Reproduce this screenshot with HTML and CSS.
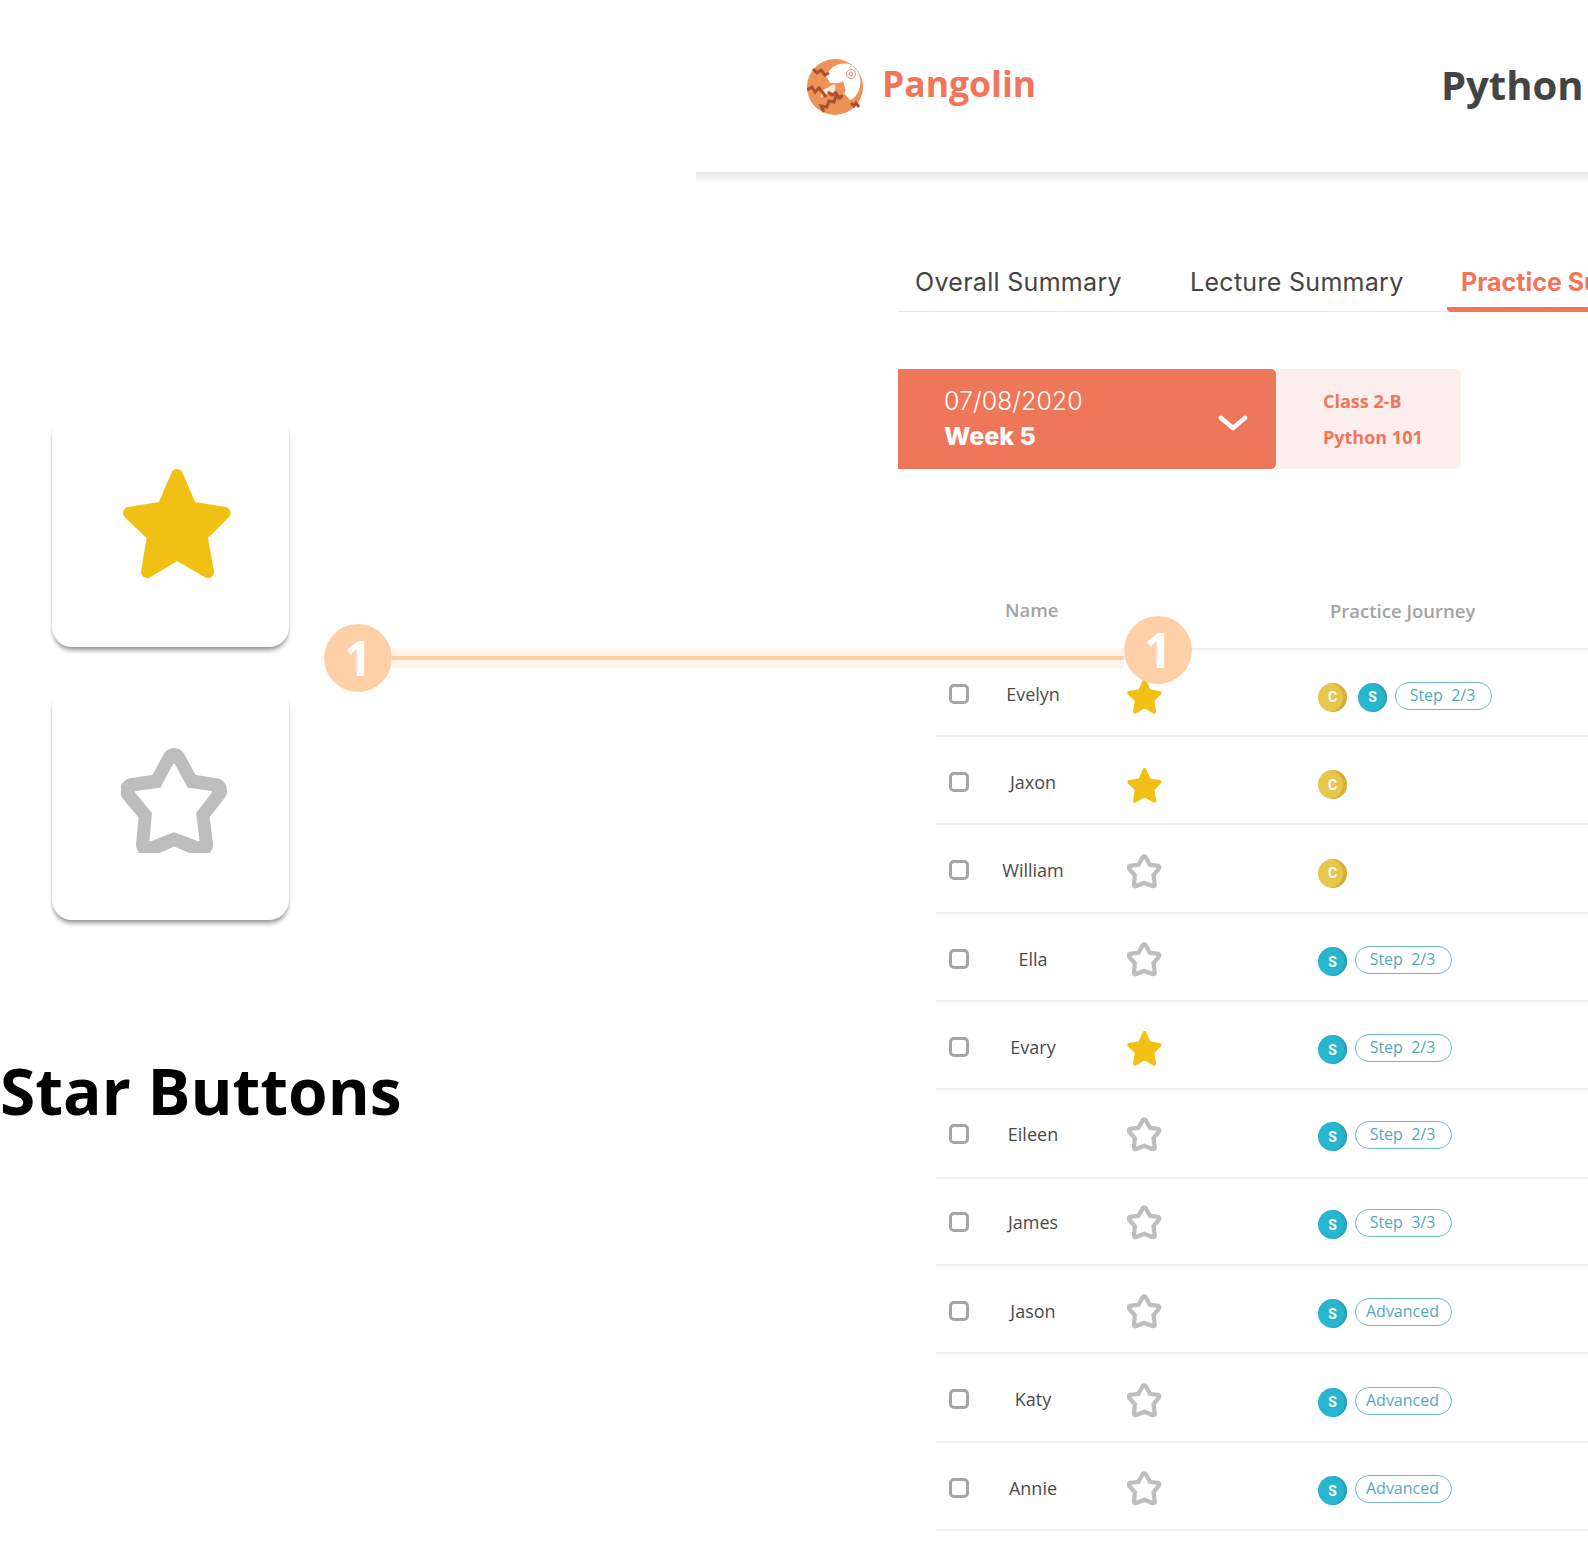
FILE: index.html
```html
<!DOCTYPE html>
<html>

	<head lang="en">
		<meta charset="UTF-8">
		<title>Star Buttons</title>
		<link rel="stylesheet" href="styles.css">
	</head>

	<body>
		<svg class="defs" width="0" height="0">
			<symbol id="star-on" viewBox="0 0 108 110">
				<polygon points="54,6 68,38.5 101.6,44 78.5,67 85,103 54,85 24,103 30,67 6,44 40,38.5" fill="#f0c014" stroke="#f0c014" stroke-width="12" stroke-linejoin="round"/>
			</symbol>
			<symbol id="star-off" viewBox="0 0 108 108" preserveAspectRatio="none">
				<polygon points="53,13 67,38 94,42 76,64 80,94 53,83 27,94 30,64 11,42 39,38" fill="#bdbdbd" stroke="#bdbdbd" stroke-width="24" stroke-linejoin="round"/>
				<polygon points="53,17 66,40 90,43.5 74,63.5 77.5,90 53,81 29.5,90 32,63.5 15,43.5 40,40" fill="#fff" stroke="#fff" stroke-width="2" stroke-linejoin="round"/>
			</symbol>
		</svg>

		<div class="page">
			<div class="side">
				<div class="card card-on">
					<svg class="big-star" viewBox="0 0 108 110"><use href="#star-on"/></svg>
				</div>
				<div class="card card-off">
					<svg class="big-star-off" viewBox="0 0 108 106"><use href="#star-off" width="108" height="112"/></svg>
				</div>
				<h1 class="side-title">Star Buttons</h1>
			</div>

			<div class="main">
				<div class="header">
					<svg class="logo" viewBox="0 0 56 56">
						<circle cx="28" cy="28" r="28" fill="#ef9258"/>
						<path d="M19 17C23 8 32 3 42 5C50 8 55 18 53 28C51 35 47 40 43 41L37 34C40 32 37 26 36 22C33 25 27 24 23 24C22 21 20 19 19 17Z" fill="#fff"/>
						<path d="M14 32C19 30 23 27 27 25C31 28 27 33 24 35C20 34 17 36 14 39Z" fill="#fde7d8"/>
						<circle cx="44" cy="15" r="4.5" fill="none" stroke="#ef8f7c" stroke-width="1"/>
						<circle cx="44" cy="15" r="2" fill="none" stroke="#ef8f7c" stroke-width="1"/>
						<g fill="none" stroke="#a9502f" stroke-width="3" stroke-linejoin="miter">
							<polyline points="6,10 10,14 14,11 18,16 22,14"/>
							<polyline points="0,31 5,28 8,33 12,29 16,34 19,38"/>
							<polyline points="21,33 25,36 29,34 31,38 36,37"/>
							<polyline points="17,53 14,47 20,48 22,42 27,43 29,37 34,40"/>
							<polyline points="44,44 47,47 49,44 52,48"/>
						</g>
					</svg>
					<div class="brand">Pangolin</div>
					<div class="course">Python</div>
				</div>
				<div class="header-shade"></div>

				<div class="tabs">
					<div class="tab tab-one">Overall Summary</div>
					<div class="tab tab-two">Lecture Summary</div>
					<div class="tab tab-active">Practice Summary</div>
				</div>

				<div class="filter">
					<div class="filter-date">
						<div>
							<div class="date">07/08/2020</div>
							<div class="week">Week 5</div>
						</div>
						<svg class="chevron" viewBox="0 0 30 16"><polyline points="3,3 15,13 27,3" fill="none" stroke="#fff" stroke-width="4.5" stroke-linecap="round" stroke-linejoin="round"/></svg>
					</div>
					<div class="filter-info">
						<div>Class 2-B</div>
						<div>Python 101</div>
					</div>
				</div>

				<div class="table">
					<div class="thead">
						<div class="th-name">Name</div>
						<div class="th-journey">Practice Journey</div>
					</div>

					<div class="row">
						<span class="check"></span><span class="name">Evelyn</span>
						<svg class="star"><use href="#star-on"/></svg>
						<div class="journey"><span class="coin coin-c">C</span><span class="coin coin-s coin-next">S</span><span class="pill">Step&nbsp; 2/3</span></div>
					</div>
					<div class="row">
						<span class="check"></span><span class="name">Jaxon</span>
						<svg class="star star-low"><use href="#star-on"/></svg>
						<div class="journey"><span class="coin coin-c">C</span></div>
					</div>
					<div class="row">
						<span class="check"></span><span class="name">William</span>
						<svg class="star star-off"><use href="#star-off"/></svg>
						<div class="journey"><span class="coin coin-c">C</span></div>
					</div>
					<div class="row">
						<span class="check"></span><span class="name">Ella</span>
						<svg class="star star-off"><use href="#star-off"/></svg>
						<div class="journey"><span class="coin coin-s">S</span><span class="pill">Step&nbsp; 2/3</span></div>
					</div>
					<div class="row">
						<span class="check"></span><span class="name">Evary</span>
						<svg class="star"><use href="#star-on"/></svg>
						<div class="journey"><span class="coin coin-s">S</span><span class="pill">Step&nbsp; 2/3</span></div>
					</div>
					<div class="row row-up">
						<span class="check"></span><span class="name">Eileen</span>
						<svg class="star star-off"><use href="#star-off"/></svg>
						<div class="journey"><span class="coin coin-s">S</span><span class="pill">Step&nbsp; 2/3</span></div>
					</div>
					<div class="row row-up">
						<span class="check"></span><span class="name">James</span>
						<svg class="star star-off"><use href="#star-off"/></svg>
						<div class="journey"><span class="coin coin-s">S</span><span class="pill">Step&nbsp; 3/3</span></div>
					</div>
					<div class="row">
						<span class="check"></span><span class="name">Jason</span>
						<svg class="star star-off"><use href="#star-off"/></svg>
						<div class="journey"><span class="coin coin-s">S</span><span class="pill">Advanced</span></div>
					</div>
					<div class="row">
						<span class="check"></span><span class="name">Katy</span>
						<svg class="star star-off"><use href="#star-off"/></svg>
						<div class="journey"><span class="coin coin-s">S</span><span class="pill">Advanced</span></div>
					</div>
					<div class="row">
						<span class="check"></span><span class="name">Annie</span>
						<svg class="star star-off"><use href="#star-off"/></svg>
						<div class="journey"><span class="coin coin-s">S</span><span class="pill">Advanced</span></div>
					</div>
				</div>
			</div>

			<div class="link-band"><div class="link-line"></div></div>
			<div class="badge badge-left">1</div>
			<div class="badge badge-right">1</div>
		</div>
	</body>

</html>
```

FILE: styles.css
```css
* {
	margin: 0;
	padding: 0;
	box-sizing: border-box;
}

body {
	background: #fff;
	font-family: "Open Sans", "Liberation Sans", sans-serif;
	color: #444;
}

.defs {
	display: block;
}

.page {
	position: relative;
	display: flex;
	width: 1588px;
	height: 1564px;
	overflow: hidden;
}

.side {
	flex: none;
	width: 696px;
	padding: 414px 0 0 0;
}

.card {
	width: 237px;
	margin-left: 52px;
	background: #fff;
	border-radius: 20px;
	box-shadow: 0 5px 4px -1px rgba(0, 0, 0, .3), 1px 2px 3px -1px rgba(0, 0, 0, .1), -1px 2px 3px -1px rgba(0, 0, 0, .1);
}

.card-on {
	height: 233px;
	padding: 55px 0 0 71px;
}

.card-off {
	height: 234px;
	margin-top: 39px;
	padding: 61px 0 0 69px;
}

.big-star {
	display: block;
	width: 108px;
	height: 110px;
}

.big-star-off {
	display: block;
	width: 108px;
	height: 106px;
}

.side-title {
	margin: 125px 0 0 0;
	font-size: 64px;
	font-weight: 700;
	line-height: 92px;
	color: #000;
	white-space: nowrap;
}

.main {
	flex: none;
	width: 892px;
}

.header {
	display: flex;
	align-items: center;
	height: 172px;
	padding: 0 0 0 111px;
}

.header-shade {
	height: 12px;
	background: linear-gradient(#e6e6e6, #fff);
}

.logo {
	flex: none;
	width: 56px;
	height: 56px;
	margin-top: 1px;
}

.brand {
	margin: -7px 0 0 19px;
	width: 559px;
	font-size: 35.5px;
	font-weight: 700;
	color: #f2755a;
}

.course {
	flex: none;
	margin-top: -3px;
	font-size: 40px;
	font-weight: 700;
	color: #444;
}

.tabs {
	display: flex;
	height: 44px;
	margin: 84px 0 0 202px;
	border-bottom: 1px solid #e8e8e8;
}

.tab {
	flex: none;
	height: 44px;
	font-family: Inter, "Open Sans", sans-serif;
	font-size: 25px;
	letter-spacing: .3px;
	line-height: 28px;
	color: #444;
	white-space: nowrap;
}

.tab-one {
	width: 292px;
	padding-left: 17px;
}

.tab-two {
	width: 257px;
}

.tab-active {
	width: 300px;
	padding-left: 14px;
	font-weight: 700;
	letter-spacing: 0;
	color: #f2755a;
	border-bottom: 5px solid #f2755a;
	border-bottom-left-radius: 4px;
}

.filter {
	display: flex;
	height: 100px;
	margin: 57px 0 0 202px;
}

.filter-date {
	display: flex;
	align-items: center;
	justify-content: space-between;
	width: 378px;
	padding: 0 28px 0 46px;
	background: #ee7659;
	border-radius: 0 5px 5px 0;
	color: #fff;
}

.date {
	font-family: Inter, "Open Sans", sans-serif;
	font-size: 25px;
	font-weight: 300;
	line-height: 35px;
}

.week {
	font-family: Inter, "Open Sans", sans-serif;
	font-size: 25px;
	font-weight: 800;
	line-height: 35px;
}

.chevron {
	width: 30px;
	height: 16px;
	margin-top: 8px;
}

.filter-info {
	width: 185px;
	padding: 14px 0 0 47px;
	background: #fceeec;
	border-radius: 0 6px 6px 0;
	font-size: 18px;
	font-weight: 700;
	line-height: 36px;
	color: #f2755a;
}

.table {
	margin-left: 240px;
}

.thead {
	display: flex;
	height: 181px;
	padding: 128px 0 0 69px;
	border-bottom: 2px solid #efefef;
	font-size: 18.5px;
	font-weight: 600;
	line-height: 26px;
	color: #a3a3a3;
}

.th-name {
	width: 325px;
}

.th-journey {
	margin-top: 1px;
}

.row {
	display: flex;
	align-items: center;
	height: 88px;
	padding: 3px 0 0 13px;
	border-bottom: 2px solid #efefef;
}

.thead + .row {
	height: 87px;
}

.row:nth-child(4),
.row:nth-child(7),
.row:nth-child(10) {
	height: 89px;
}

.row:nth-child(8) {
	height: 87px;
}

.row-up {
	padding-top: 0;
}

.check {
	flex: none;
	width: 20px;
	height: 20px;
	border: 3px solid #a5a5a5;
	border-radius: 5px;
}

.name {
	flex: none;
	width: 100px;
	margin-left: 14px;
	font-size: 18px;
	line-height: 26px;
	text-align: center;
	color: #4a4a4a;
}

.star {
	flex: none;
	width: 35px;
	height: 35px;
	margin: 4px 0 0 44px;
}

.star-low {
	margin-top: 8px;
}

.star-off {
	margin-top: 2px;
}

.journey {
	display: flex;
	align-items: center;
	margin: 3px 0 0 156px;
}

.coin {
	display: flex;
	flex: none;
	align-items: center;
	justify-content: center;
	width: 29px;
	height: 29px;
	margin: 3px 8px 0 0;
	border-radius: 50%;
	font-family: Roboto, sans-serif;
	font-size: 14px;
	font-weight: 700;
	color: #fff;
}

.coin-c {
	background: #e8c64c;
	box-shadow: inset -4px 0 0 #d8ae3a;
}

.coin-s {
	background: #27b5d0;
	box-shadow: inset -3px 0 0 #2ca3bb;
}

.coin-next {
	margin-left: 3px;
}

.pill {
	flex: none;
	width: 97px;
	height: 28px;
	padding-right: 2px;
	border: 1.5px solid #70b5c9;
	border-radius: 14px;
	font-size: 16px;
	line-height: 25px;
	text-align: center;
	color: #53a8c0;
}

.link-band {
	position: absolute;
	left: 392px;
	top: 648px;
	width: 732px;
	height: 20px;
	padding-top: 8px;
	background: #fff3ea;
}

.link-line {
	height: 4px;
	background: #ffd0a8;
}

.badge {
	position: absolute;
	width: 68px;
	height: 68px;
	border-radius: 50%;
	background: #ffd0a8;
	font-size: 48px;
	font-weight: 700;
	line-height: 68px;
	text-align: center;
	color: #fff;
}

.badge-left {
	left: 324px;
	top: 624px;
}

.badge-right {
	left: 1124px;
	top: 616px;
}
```
